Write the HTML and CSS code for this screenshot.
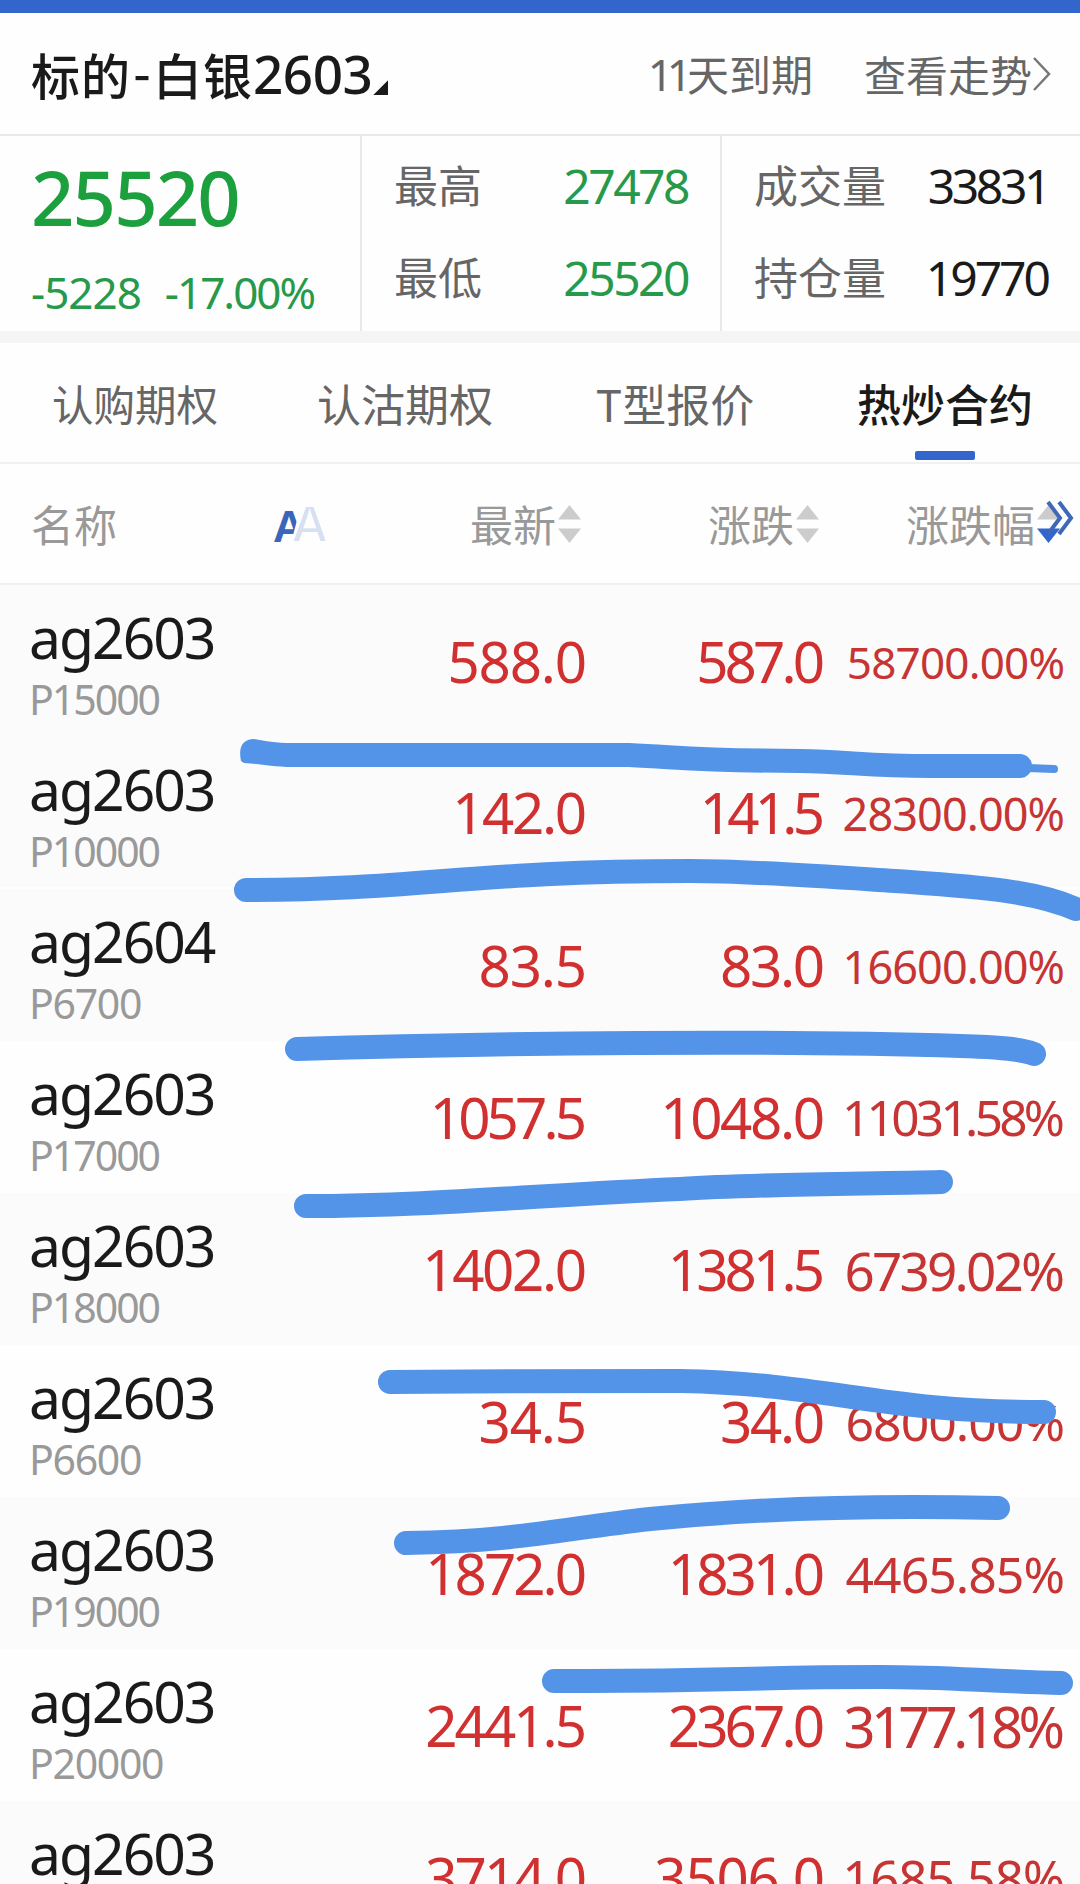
FILE: index.html
```html
<!DOCTYPE html>
<html lang="zh-CN">
<head>
    <meta charset="UTF-8">
    <meta name="viewport" content="width=device-width, initial-scale=1.0">
    <title>白银期权</title>
    <link rel="stylesheet" href="styles.css">
</head>
<body>
    <div class="topbar"></div>

    <header class="header">
        <h1 class="title"><span class="cjk">标的</span><span class="dash">-</span><span class="cjk">白银</span><span class="num">2603</span></h1>
        <span class="title-corner"></span>
        <span class="expire"><span class="days">11</span>天到期</span>
        <span class="trend">查看走势</span>
        <svg class="chevron" width="19" height="34" viewBox="0 0 19 34"><path d="M2 1 L17 17 L2 33"/></svg>
    </header>

    <!-- Quote summary -->
    <section class="quote">
        <div class="quote-main">
            <div class="price">25520</div>
            <div class="change"><span class="diff">-5228</span><span class="rate">-17.00%</span></div>
        </div>
        <div class="quote-col">
            <div class="stat"><span class="label">最高</span><span class="val green">27478</span></div>
            <div class="stat"><span class="label">最低</span><span class="val green">25520</span></div>
        </div>
        <div class="quote-col">
            <div class="stat"><span class="label">成交量</span><span class="val v1">33831</span></div>
            <div class="stat"><span class="label">持仓量</span><span class="val v2">19770</span></div>
        </div>
    </section>

    <nav class="tabs">
        <div class="tab small">认购期权</div>
        <div class="tab">认沽期权</div>
        <div class="tab">T型报价</div>
        <div class="tab active">热炒合约</div>
    </nav>

    <div class="grid thead">
        <div class="th-name">名称
            <svg class="font-size" width="64" height="60" viewBox="0 0 64 60">
                <clipPath id="smallA"><path d="M0 0 L36 0 L20 60 L0 60Z"/></clipPath>
                <text class="a-small" x="5" y="48" clip-path="url(#smallA)">A</text>
                <text class="a-big" x="23" y="48">A</text>
            </svg>
        </div>
        <div class="th">最新<svg class="sort" width="23" height="38" viewBox="0 0 23 38"><path d="M0 14.5 L11.5 0 L23 14.5Z"/><path d="M0 23.5 L23 23.5 L11.5 38Z"/></svg></div>
        <div class="th">涨跌<svg class="sort" width="23" height="38" viewBox="0 0 23 38"><path d="M0 14.5 L11.5 0 L23 14.5Z"/><path d="M0 23.5 L23 23.5 L11.5 38Z"/></svg></div>
        <div class="th last">涨跌幅<svg class="sort" width="23" height="38" viewBox="0 0 23 38"><path d="M0 14.5 L11.5 0 L23 14.5Z"/><path class="on" d="M0 23.5 L23 23.5 L11.5 38Z"/></svg></div>
        <svg class="more" width="28" height="36" viewBox="0 0 28 36"><path d="M2 2 L14 18 L2 34"/><path d="M13 2 L25 18 L13 34"/></svg>
    </div>

    <!-- Contract list -->
    <main class="list">
        <div class="grid row shade">
            <div class="name"><b>ag2603</b><small class="tight">P15000</small></div>
            <span class="cell s1">588.0</span><span class="cell s4">587.0</span><span class="cell pct p1">58700.00%</span>
        </div>
        <div class="grid row shade line">
            <div class="name"><b>ag2603</b><small class="tight">P10000</small></div>
            <span class="cell s2">142.0</span><span class="cell s5">141.5</span><span class="cell pct p2">28300.00%</span>
        </div>
        <div class="grid row shade">
            <div class="name"><b>ag2604</b><small>P6700</small></div>
            <span class="cell s1">83.5</span><span class="cell s2">83.0</span><span class="cell pct p2">16600.00%</span>
        </div>
        <div class="grid row">
            <div class="name"><b>ag2603</b><small class="tight">P17000</small></div>
            <span class="cell s4">1057.5</span><span class="cell s2">1048.0</span><span class="cell pct p4">11031.58%</span>
        </div>
        <div class="grid row shade">
            <div class="name"><b>ag2603</b><small class="tight">P18000</small></div>
            <span class="cell s2">1402.0</span><span class="cell s4">1381.5</span><span class="cell pct p5">6739.02%</span>
        </div>
        <div class="grid row">
            <div class="name"><b>ag2603</b><small>P6600</small></div>
            <span class="cell s1">34.5</span><span class="cell s2">34.0</span><span class="cell pct p6">6800.00%</span>
        </div>
        <div class="grid row shade">
            <div class="name"><b>ag2603</b><small class="tight">P19000</small></div>
            <span class="cell s3">1872.0</span><span class="cell s4">1831.0</span><span class="cell pct p6">4465.85%</span>
        </div>
        <div class="grid row">
            <div class="name"><b>ag2603</b><small>P20000</small></div>
            <span class="cell s3">2441.5</span><span class="cell s4">2367.0</span><span class="cell pct p8">3177.18%</span>
        </div>
        <div class="grid row shade">
            <div class="name"><b>ag2603</b></div>
            <span class="cell s3">3714.0</span><span class="cell s1">3506.0</span><span class="cell pct p9">1685.58%</span>
        </div>
    </main>

    <!-- Hand-drawn marker lines over the list -->
    <svg class="marker" width="1080" height="1884" viewBox="0 0 1080 1884">
        <path class="knob" d="M241 761 C238 747 243 739 254 739 C266 741 275 743 292 743 L292 767 C270 767 262 764 244 763 Z"/>
        <path d="M288 755 L629 755 C690 758 700 760.500 800 761 C850 762 870 766 930 766 L1020 766"/>
        <path class="thin" d="M1028 768 L1054 769"/>
        <path d="M246 890 C420 890 470 871 690 871 C760 871 860 879 910 882 C980 887 1035 891 1076 909"/>
        <path d="M297 1049 C500 1043 780 1040 960 1046 C1000 1047 1020 1049 1034 1054"/>
        <path d="M306 1206 C430 1206 540 1195 680 1189 C760 1184 860 1184 941 1182"/>
        <path d="M390 1382 C480 1381 600 1381 680 1381 C830 1384 880 1412 1044 1412"/>
        <path d="M406 1543 C520 1541 560 1529 650 1519 C760 1508 870 1505 998 1508"/>
        <path d="M554 1681 C720 1682 740 1677 880 1677 C950 1677 980 1681 1061 1683"/>
    </svg>
</body>
</html>
```
FILE: styles.css
```css
* {
    box-sizing: border-box;
}

body {
    margin: 0;
    width: 1080px;
    height: 1884px;
    overflow: hidden;
    position: relative;
    background-color: #fefefe;
    color: #1a1a1a;
    font-family: "Noto Sans", "Noto Sans CJK SC", sans-serif;
    line-height: 1;
}

.topbar {
    height: 13px;
    background-color: #3266cc;
}

/* Header */
.header {
    display: flex;
    align-items: center;
    height: 123px;
    padding: 0 29px 0 31px;
    border-bottom: 2px solid #e9e9e9;
    font-family: "Noto Sans CJK SC", sans-serif;
    font-size: 42px;
    color: #666;
}

.title {
    display: flex;
    align-items: center;
    margin: 0;
    font-size: 49px;
    font-weight: 500;
    color: #1a1a1a;
}

.title .cjk {
    letter-spacing: 1px;
}

.title .dash {
    width: 22px;
    padding-bottom: 6px;
    text-align: center;
}

.title .num {
    font-family: "Noto Sans", sans-serif;
    font-size: 53px;
    letter-spacing: -0.5px;
}

.title-corner {
    width: 15px;
    height: 15px;
    margin: 28px 0 0 1px;
    background-color: #1a1a1a;
    clip-path: polygon(100% 0, 100% 100%, 0 100%);
}

.expire {
    margin-left: auto;
}

.days {
    font-family: "Noto Sans", sans-serif;
    font-size: 44px;
    letter-spacing: -6px;
    margin-right: 1px;
}

.trend {
    margin-left: 51px;
}

.chevron {
    fill: none;
    stroke: #777;
    stroke-width: 2.5;
}

/* Quote summary */
.quote {
    display: grid;
    grid-template-columns: 360px 360px 360px;
    height: 207px;
    border-bottom: 12px solid #f5f5f5;
}

.quote-main {
    padding: 23px 0 0 31px;
    color: #1c9f3d;
}

.price {
    font-size: 76px;
    font-weight: 500;
    letter-spacing: -1.9px;
}

.change {
    margin-top: 35px;
    font-size: 44px;
    color: #27994a;
}

.diff {
    letter-spacing: -1px;
}

.rate {
    margin-left: 24px;
    letter-spacing: -2px;
}

.quote-col {
    padding: 4px 32px 0;
    border-left: 2px solid #e9e9e9;
}

.stat {
    display: flex;
    align-items: center;
    justify-content: space-between;
    height: 92px;
}

.label {
    padding-bottom: 4px;
    font-family: "Noto Sans CJK SC", sans-serif;
    font-size: 44px;
    color: #666;
}

.val {
    font-size: 48px;
    letter-spacing: -2.5px;
}

.v1 {
    letter-spacing: -3.4px;
}

.v2 {
    letter-spacing: -3px;
}

.green {
    color: #27994a;
}

/* Tabs */
.tabs {
    display: grid;
    grid-template-columns: repeat(4, 1fr);
    height: 121px;
    border-bottom: 2px solid #f1f1f1;
    font-family: "Noto Sans CJK SC", sans-serif;
    font-size: 44px;
    color: #666;
}

.tab {
    display: flex;
    align-items: center;
    justify-content: center;
    position: relative;
}

.tab.small {
    padding-top: 3px;
    font-size: 41.5px;
}

.tab.active {
    font-weight: 500;
    color: #1a1a1a;
}

.tab.active::after {
    content: "";
    position: absolute;
    bottom: 2px;
    left: 105px;
    width: 60px;
    height: 9px;
    border-radius: 2px;
    background-color: #3266cc;
}

/* Contract table */
.grid {
    display: grid;
    grid-template-columns: 347px 240px 238px 240px;
    align-items: center;
}

.thead {
    position: relative;
    height: 121px;
    border-bottom: 2px solid #f1f1f1;
    font-family: "Noto Sans CJK SC", sans-serif;
    font-size: 43px;
    color: #999;
}

.th-name {
    display: flex;
    align-items: center;
    padding-left: 31px;
}

.font-size {
    margin-left: 151px;
    font-family: "Liberation Sans", sans-serif;
    font-weight: 700;
}

.a-small {
    font-size: 44px;
    fill: #3a65b9;
}

.a-big {
    font-size: 52px;
    fill: #d7e0f1;
    stroke: #fefefe;
    stroke-width: 2px;
}

.th {
    display: flex;
    align-items: center;
    justify-content: flex-end;
    padding-right: 6px;
}

.th.last {
    padding-right: 5px;
}

.sort {
    margin-left: 2px;
    fill: #ccc;
}

.sort .on {
    fill: #3266cc;
}

.more {
    position: absolute;
    right: 6px;
    top: 36px;
    fill: none;
    stroke: #4068b8;
    stroke-width: 4;
}

.row {
    height: 152px;
}

.shade {
    background-color: #fbfbfb;
}

.line {
    border-bottom: 2px solid #fefefe;
}

.name {
    align-self: start;
    padding: 24px 0 0 29px;
}

.name b,
.name small {
    display: block;
}

.name b {
    font-size: 57px;
    font-weight: 400;
    letter-spacing: -2px;
}

.name small {
    margin-top: 13px;
    font-size: 41px;
    letter-spacing: -1.3px;
    color: #999;
}

.name .tight {
    letter-spacing: -2px;
}

.cell {
    --ls: -1px;
    justify-self: end;
    padding-top: 2px;
    font-size: 56.5px;
    letter-spacing: var(--ls);
    margin-right: calc(var(--ls) * -1);
    color: #d03030;
    white-space: nowrap;
}

.s1 { --ls: -1.2px; }
.s2 { --ls: -2.4px; }
.s3 { --ls: -3px; }
.s4 { --ls: -3.9px; }
.s5 { --ls: -4.8px; }

/* Long percentages shrink to fit the column */
.pct { color: #c73434; }
.p1 { --ls: -0.8px; font-size: 44px; }
.p2 { --ls: -0.9px; font-size: 45px; }
.p4 { --ls: -3.7px; font-size: 49.5px; }
.p5 { --ls: -2.8px; font-size: 53px; }
.p6 { --ls: -1px; font-size: 50px; }
.p8 { --ls: -4.6px; font-size: 56px; }
.p9 { --ls: -1.2px; font-size: 51px; }

.marker {
    position: absolute;
    top: 0;
    left: 0;
    fill: none;
    stroke: #5394e8;
    stroke-width: 24;
    stroke-linecap: round;
    pointer-events: none;
}

.marker .thin {
    stroke-width: 8;
}

.marker .knob {
    fill: #5394e8;
    stroke: none;
}
```
